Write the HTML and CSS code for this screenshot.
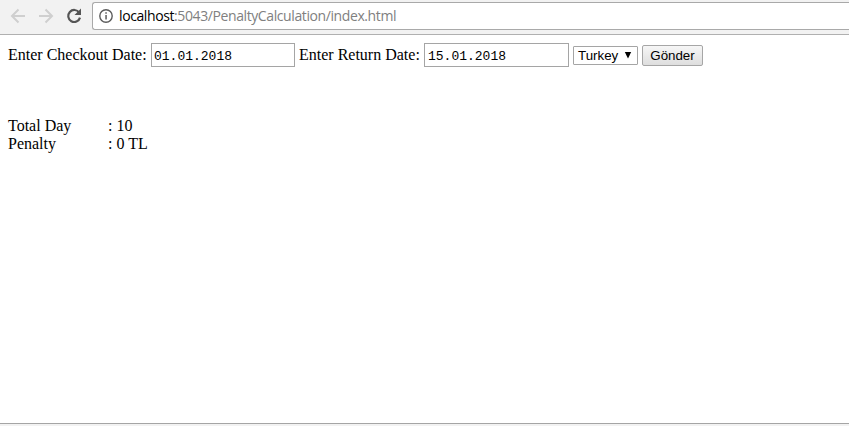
FILE: index.html
```html
<!DOCTYPE html>
<html lang="en">
<head>
<meta charset="utf-8">
<title>Penalty Calculation</title>
<link rel="stylesheet" href="styles.css">
</head>
<body>
<header class="toolbar">
  <svg class="nav" width="86" height="34" viewBox="0 0 86 34" fill="none" stroke-width="2">
    <g stroke="#cfcfcf"><path d="M25 16H12.500M18.500 9.500L12 16L18.500 22.500"/><path d="M39 16H51.500M45.500 9.500L52 16L45.500 22.500"/></g>
    <path d="M79.200 12.600A6 6 0 1 0 80 17.600" stroke="#555" stroke-width="2.200"/><path d="M81 8.500V15H74.500Z" fill="#555"/>
  </svg>
  <div class="address">
    <svg class="info" width="14" height="14" viewBox="0 0 14 14"><circle cx="7" cy="7" r="6.200" fill="none" stroke="#5c5c5c" stroke-width="1.400"/><path d="M6.300 6h1.500v4.500H6.300zM6.300 3.300h1.500v1.500H6.300z" fill="#5c5c5c"/></svg>
    <span class="url"><span class="host">localhost</span>:5043/PenaltyCalculation/index.html</span>
  </div>
</header>
<main class="page">
  <form class="controls">
    <label class="checkout" for="checkout">Enter Checkout Date:</label>
    <input class="date" id="checkout" value="01.01.2018">
    <label class="return" for="return">Enter Return Date:</label>
    <input class="date second" id="return" value="15.01.2018">
    <div class="country"><span>Turkey</span><svg width="8" height="7" viewBox="0 0 8 7"><path d="M.8 0H7.200L4 6.500Z"/></svg></div>
    <button class="submit" type="button">Gönder</button>
  </form>
  <dl class="result">
    <dt>Total Day</dt><dd>: 10</dd>
    <dt>Penalty</dt><dd>: 0 TL</dd>
  </dl>
</main>
<footer class="bottom"></footer>
</body>
</html>
```
FILE: styles.css
```css
* { box-sizing: border-box; }
body {
  margin: 0;
  height: 426px;
  display: flex;
  flex-direction: column;
  overflow: hidden;
  background: #fff;
  color: #000;
  font: 16px/18px "Liberation Serif", serif;
}
.toolbar {
  display: flex;
  height: 35px;
  flex: none;
  background: #f2f2f2;
  border-bottom: 1px solid #b0b0b0;
}
.nav { flex: none; margin-right: 6px; }
.address {
  flex: 1;
  display: flex;
  align-items: center;
  height: 28px;
  margin-top: 2px;
  padding-left: 6px;
  background: #fff;
  border: 1px solid #a9a9a9;
  border-right: 0;
  border-radius: 3px 0 0 3px;
}
.info { flex: none; margin-right: 6px; }
.url {
  font: 14px/20px "Open Sans", sans-serif;
  color: #808080;
  white-space: nowrap;
  width: 277px;
  letter-spacing: -0.4px;
}
.host { color: #000; }
.page { flex: 1; padding: 8px 8px 0; }
.controls { display: flex; height: 24px; align-items: center; white-space: nowrap; }
.checkout { width: 143px; }
.return { width: 129px; padding-left: 4px; }
.date {
  width: 144px;
  height: 24px;
  margin: 0;
  padding: 3px 2px 1px;
  border: 1px solid #a5a5a5;
  background: #fff;
  color: #000;
  font: 13px "Liberation Mono", monospace;
}
.second { width: 145px; padding-left: 3px; }
.country {
  display: flex;
  align-items: center;
  justify-content: space-between;
  width: 65px;
  height: 19px;
  margin: 1px 4px 0;
  padding: 0 5px 0 4px;
  border: 1px solid #a5a5a5;
  border-radius: 1px;
  font: 13.333px "Liberation Sans", sans-serif;
}
.submit {
  width: 61px;
  height: 21px;
  margin: 1px 0 0;
  padding: 0;
  border: 1px solid #a6a6a6;
  border-radius: 2px;
  background: linear-gradient(#f6f6f6, #dedede);
  color: #000;
  font: 13.333px "Liberation Sans", sans-serif;
}
.result {
  display: grid;
  grid-template-columns: 100px auto;
  margin: 50px 0 0;
}
.result dd { margin: 0; }
.bottom { flex: none; height: 3px; background: #f2f2f2; border-top: 1px solid #a5a5a5; }
```
